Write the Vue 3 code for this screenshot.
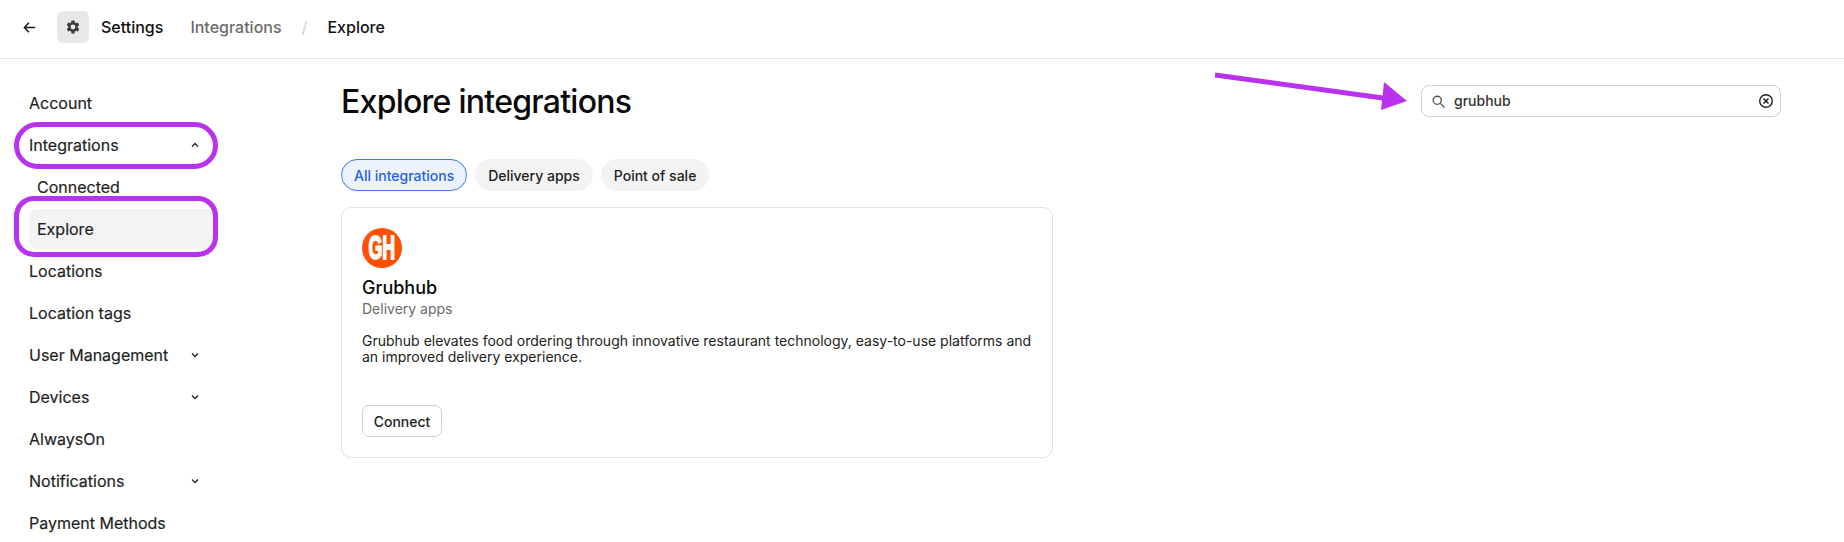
<template>
  <div class="page">
    <header class="topbar">
      <button class="back" aria-label="Back">
        <svg width="15" height="15" viewBox="0 0 24 24" fill="none" stroke="#1a1a1a" stroke-width="2.4">
          <path d="M21 12H4M11 4.5 3.8 12l7.2 7.5" />
        </svg>
      </button>
      <span class="gear">
        <svg width="16" height="16" viewBox="0 0 24 24" fill="#3d3d3d">
          <path d="M19.14 12.94c.04-.3.06-.61.06-.94s-.02-.64-.07-.94l2.03-1.58a.49.49 0 0 0 .12-.61l-1.92-3.32a.49.49 0 0 0-.59-.22l-2.39.96a7 7 0 0 0-1.62-.94l-.36-2.54a.48.48 0 0 0-.48-.41h-3.84a.47.47 0 0 0-.47.41l-.36 2.54c-.59.24-1.13.57-1.62.94l-2.39-.96a.48.48 0 0 0-.59.22L2.74 8.87a.47.47 0 0 0 .12.61l2.03 1.58c-.05.3-.09.63-.09.94s.02.64.07.94l-2.03 1.58a.49.49 0 0 0-.12.61l1.92 3.32c.12.22.37.29.59.22l2.39-.96c.5.38 1.03.7 1.62.94l.36 2.54c.05.24.24.41.48.41h3.84c.24 0 .44-.17.47-.41l.36-2.54c.59-.24 1.13-.56 1.62-.94l2.39.96c.22.08.47 0 .59-.22l1.92-3.32a.47.47 0 0 0-.12-.61zM12 15.6A3.6 3.6 0 1 1 12 8.4a3.6 3.6 0 0 1 0 7.2z" />
        </svg>
      </span>
      <span class="app-name">Settings</span>
      <nav class="crumbs">
        <span class="crumb-link">Integrations</span>
        <span class="crumb-sep">/</span>
        <span class="crumb-current">Explore</span>
      </nav>
    </header>

    <div class="body">
      <aside class="sidebar">
        <div
          v-for="item in navItems"
          :key="item.label"
          class="nav-item"
          :class="{ sub: item.sub, active: item.active }"
        >
          <span>{{ item.label }}</span>
          <svg v-if="item.chevron" class="chevron" :class="{ up: item.chevron === 'up' }" width="8" height="6" viewBox="0 0 8 6" fill="none" stroke="#222" stroke-width="1.3">
            <path d="M1 1.5 4 4.5 7 1.5" />
          </svg>
        </div>
      </aside>

      <main class="content">
        <div class="title-row">
          <h1>Explore integrations</h1>
          <div class="search">
            <svg width="15" height="15" viewBox="0 0 24 24" fill="none" stroke="#555" stroke-width="2.2">
              <circle cx="10" cy="10" r="6.5" />
              <path d="m15 15 6.5 6.5" />
            </svg>
            <span class="search-text">grubhub</span>
            <svg class="clear" width="16" height="16" viewBox="0 0 16 16" fill="none" stroke="#222">
              <circle cx="8" cy="8" r="6.3" stroke-width="1.4" />
              <path d="m5.5 5.5 5 5m0-5-5 5" stroke-width="1.6" />
            </svg>
          </div>
        </div>

        <div class="chips">
          <span v-for="chip in chips" :key="chip" class="chip" :class="{ selected: chip === 'All integrations' }">{{ chip }}</span>
        </div>

        <section class="card">
          <div class="logo"><span class="logo-text">GH</span></div>
          <h2>Grubhub</h2>
          <div class="category">Delivery apps</div>
          <p>Grubhub elevates food ordering through innovative restaurant technology, easy-to-use platforms and an improved delivery experience.</p>
          <button class="connect">Connect</button>
        </section>
      </main>
    </div>

    <!-- annotations drawn over the screenshot -->
    <div class="mark mark-integrations"></div>
    <div class="mark mark-explore"></div>
    <svg class="arrow" width="210" height="50" viewBox="0 0 210 50">
      <path d="M1 5 176 29" stroke="#b832f0" stroke-width="5" fill="none" />
      <path d="M170 12 193 31 167 40Z" fill="#b832f0" />
    </svg>
  </div>
</template>

<script setup>
const navItems = [
  { label: "Account" },
  { label: "Integrations", chevron: "up" },
  { label: "Connected", sub: true },
  { label: "Explore", sub: true, active: true },
  { label: "Locations" },
  { label: "Location tags" },
  { label: "User Management", chevron: "down" },
  { label: "Devices", chevron: "down" },
  { label: "AlwaysOn" },
  { label: "Notifications", chevron: "down" },
  { label: "Payment Methods" }
];

const chips = ["All integrations", "Delivery apps", "Point of sale"];
</script>

<style>
html,
body {
  margin: 0;
  background: #fff;
}
</style>

<style scoped>
.page {
  position: relative;
  height: 542px;
  overflow: hidden;
  font-family: Inter, "Liberation Sans", sans-serif;
  color: #1a1a1a;
}
.topbar {
  display: flex;
  align-items: center;
  box-sizing: border-box;
  height: 59px;
  padding: 0 0 4px 22px;
  border-bottom: 1px solid #e8e8e8;
  font-size: 16px;
  font-weight: 500;
}
.back {
  display: flex;
  padding: 0;
  border: none;
  background: none;
  margin-right: 20px;
}
.gear {
  display: flex;
  align-items: center;
  justify-content: center;
  width: 32px;
  height: 32px;
  background: #e8e8e8;
  border-radius: 6px;
  margin-right: 12px;
}
.app-name {
  color: #111;
  margin-right: 27px;
}
.crumbs {
  display: flex;
  align-items: center;
}
.crumb-link {
  color: #6b6b6b;
}
.crumb-sep {
  color: #d4d4d4;
  margin: 0 20px;
}
.crumb-current {
  color: #111;
}
.body {
  display: flex;
}
.sidebar {
  width: 184px;
  padding: 23px 0 0 29px;
  flex-shrink: 0;
}
.nav-item {
  display: flex;
  align-items: center;
  justify-content: space-between;
  height: 42px;
  padding-right: 14px;
  font-size: 16px;
  font-weight: 400;
  -webkit-text-stroke: 0.2px #1f1f1f;
  color: #1f1f1f;
}
.nav-item.sub {
  padding-left: 8px;
}
.nav-item.active {
  height: 40px;
  margin: 1px 0;
  background: #f3f3f3;
  border-radius: 8px;
}
.chevron.up {
  transform: rotate(180deg);
}
.content {
  width: 1440px;
  margin-left: 128px;
}
.title-row {
  display: flex;
  align-items: center;
  justify-content: space-between;
  padding-top: 26px;
  height: 32px;
}
h1 {
  margin: 2px 0 0;
  font-size: 32px;
  line-height: 38px;
  font-weight: 450;
  letter-spacing: -0.74px;
  color: #0a0a0a;
}
.search {
  display: flex;
  align-items: center;
  box-sizing: border-box;
  width: 360px;
  height: 32px;
  padding: 0 6px 0 9px;
  border: 1px solid #d0d0d0;
  border-radius: 8px;
  font-size: 14px;
  font-weight: 500;
  line-height: 28px;
  color: #333;
}
.search-text {
  flex: 1;
  margin: -1px 0 0 8px;
}
.chips {
  display: flex;
  gap: 8px;
  margin-top: 42px;
}
.chip {
  display: flex;
  align-items: center;
  height: 32px;
  padding: 0 13px;
  border-radius: 16px;
  background: #f3f3f3;
  font-size: 14px;
  font-weight: 500;
  color: #222;
  box-sizing: border-box;
}
.chip.selected {
  background: #edf3fe;
  border: 1px solid #3b7df0;
  color: #1f62e0;
  padding: 0 12px;
}
.card {
  box-sizing: border-box;
  width: 712px;
  height: 251px;
  margin-top: 16px;
  padding: 20px;
  border: 1px solid #e2e2e2;
  border-radius: 10px;
  display: flex;
  flex-direction: column;
  align-items: flex-start;
}
.logo {
  display: flex;
  align-items: center;
  justify-content: center;
  width: 40px;
  height: 40px;
  flex-shrink: 0;
  border-radius: 50%;
  background: #ff5000;
}
.logo-text {
  display: block;
  font-family: "Liberation Sans", sans-serif;
  font-size: 33px;
  line-height: 40px;
  font-weight: 700;
  color: #fff;
  -webkit-text-stroke: 1.8px #fff;
  transform: scaleX(0.54);
}
h2 {
  margin: 9px 0 0;
  font-size: 18px;
  line-height: 22px;
  font-weight: 450;
  color: #0a0a0a;
}
.category {
  font-size: 14px;
  line-height: 20px;
  color: #6b6b6b;
}
p {
  margin: 14px 0 0;
  font-size: 14px;
  line-height: 16px;
  color: #222;
}
.connect {
  margin-top: auto;
  box-sizing: border-box;
  width: 80px;
  height: 32px;
  padding: 0;
  background: #fff;
  border: 1px solid #d0d0d0;
  border-radius: 7px;
  font-family: inherit;
  font-size: 14px;
  font-weight: 500;
  color: #222;
}
.mark {
  position: absolute;
  box-sizing: border-box;
  left: 14px;
  width: 204px;
  border: 5px solid #b832f0;
  pointer-events: none;
}
.mark-integrations {
  top: 122px;
  height: 47px;
  border-radius: 24px;
}
.mark-explore {
  top: 196px;
  height: 61px;
  border-radius: 20px;
}
.arrow {
  position: absolute;
  left: 1214px;
  top: 70px;
}
</style>
